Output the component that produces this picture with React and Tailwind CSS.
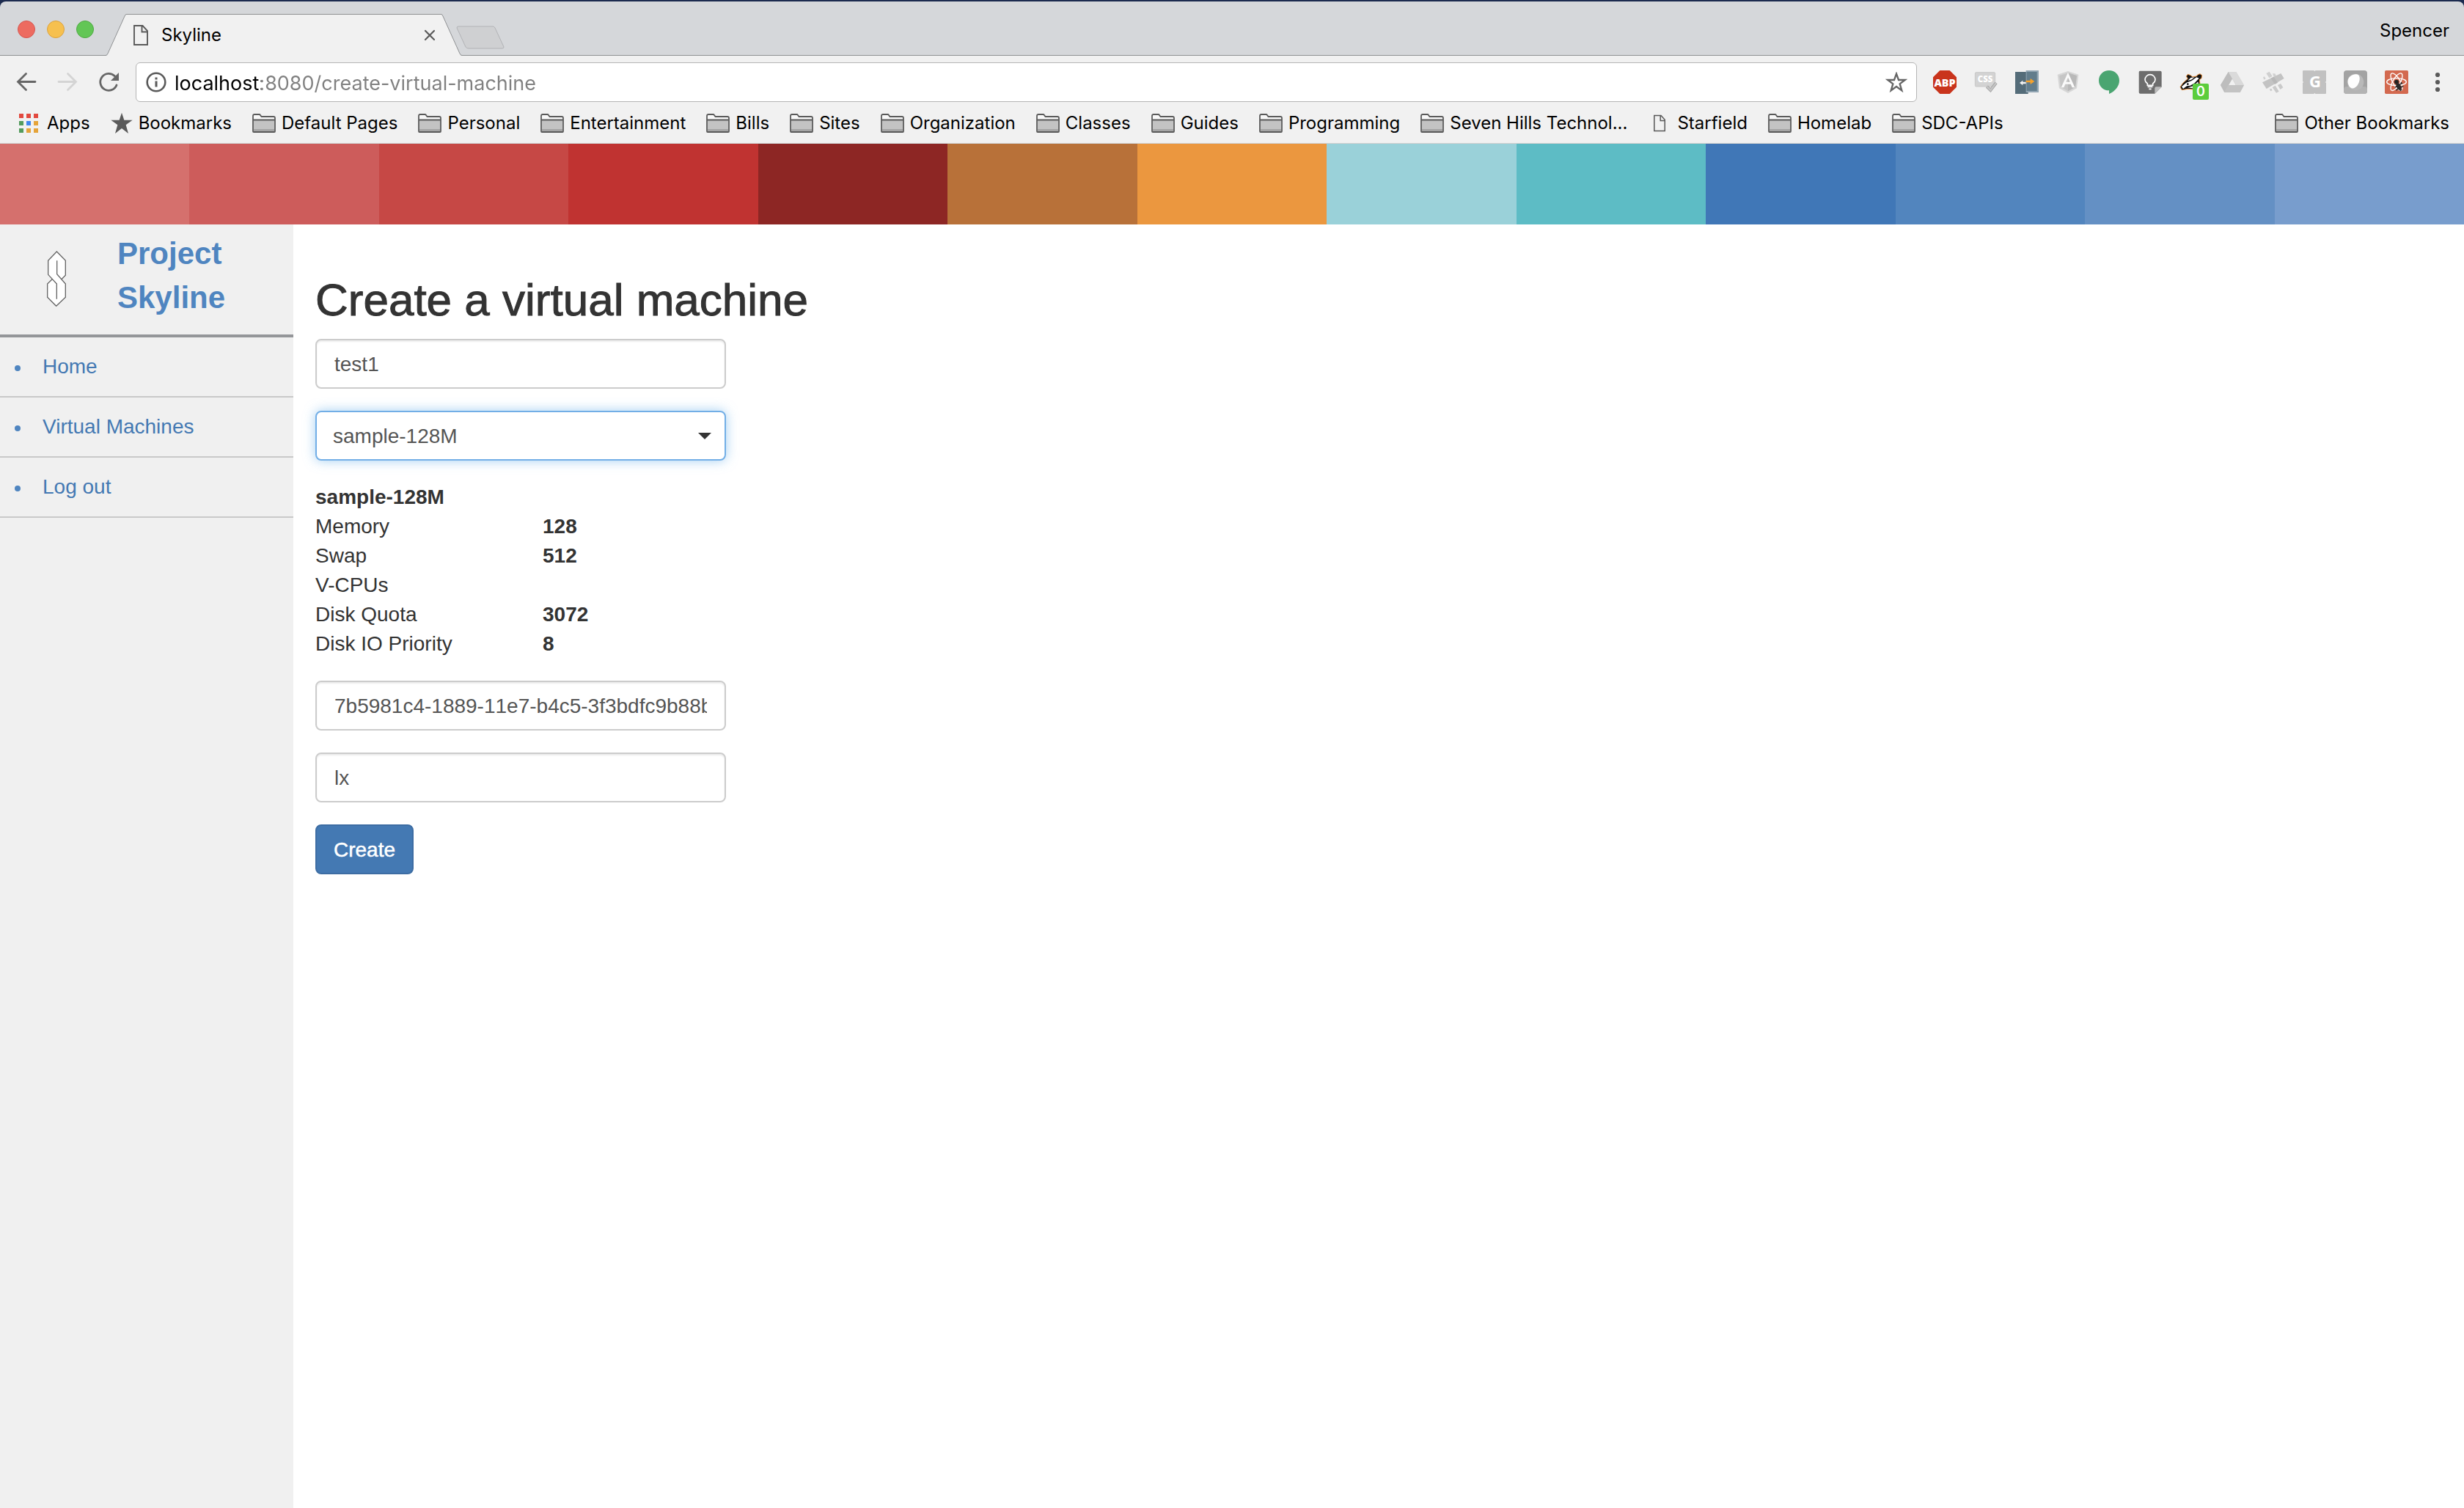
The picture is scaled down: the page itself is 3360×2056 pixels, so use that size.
import React from "react";

const BAND_COLORS = [
  "bg-[#d5706d]",
  "bg-[#cd5c5b]",
  "bg-[#c64845]",
  "bg-[#c03331]",
  "bg-[#8d2624]",
  "bg-[#b87139]",
  "bg-[#eb973f]",
  "bg-[#9ad1d9]",
  "bg-[#5dbcc5]",
  "bg-[#4077b7]",
  "bg-[#5285be]",
  "bg-[#6490c4]",
  "bg-[#789dcd]",
];

function AppsIcon() {
  const colors = ["#e2493f", "#e2493f", "#e2493f", "#539b5d", "#3f87f0", "#e5a43a", "#539b5d", "#e5a43a", "#e5a43a"];
  return (
    <svg className="h-[26px] w-[26px]" viewBox="0 0 26 26" aria-hidden="true">
      {colors.map((c, i) => (
        <rect key={i} x={(i % 3) * 10} y={Math.floor(i / 3) * 10} width="6" height="6" fill={c} />
      ))}
    </svg>
  );
}

function StarIcon() {
  return (
    <svg className="h-[30px] w-[30px]" viewBox="0 0 90 90" aria-hidden="true">
      <path d="M45 2 55 32H89L62 52 72 87 45 66 18 87 28 52 1 32H35Z" fill="#5a5a5a" />
    </svg>
  );
}

function FolderIcon() {
  return (
    <svg className="h-[26px] w-[32px]" viewBox="0 0 32 26" aria-hidden="true">
      <path d="M1 24V3q0-2 2-2h6.500q1 0 1.500 1l1.500 2H31v20q0 1-1 1H2q-1 0-1-1z" fill="#f8f8f8" />
      <rect x="2" y="9" width="28" height="15" fill="#c3c3c3" />
      <rect x="2" y="21" width="28" height="3" fill="#a5a5a5" />
      <path d="M1 24V3q0-2 2-2h6.500q1 0 1.500 1l1.500 2H29q2 0 2 2v18q0 1-1 1H2q-1 0-1-1zM1 8.500H31" fill="none" stroke="#5a5a5a" strokeWidth="1.800" />
    </svg>
  );
}

function PageIcon({ className }) {
  return (
    <svg className={className} viewBox="0 0 20 28" aria-hidden="true">
      <path d="M1 1h11.500L19 8v19H1zM11.500 1v8.500H19" fill="none" stroke="#5a5a5a" strokeWidth="1.900" />
    </svg>
  );
}

const BOOKMARKS = [
  ["Apps", "apps"],
  ["Bookmarks", "star"],
  ["Default Pages", "folder"],
  ["Personal", "folder"],
  ["Entertainment", "folder"],
  ["Bills", "folder"],
  ["Sites", "folder"],
  ["Organization", "folder"],
  ["Classes", "folder"],
  ["Guides", "folder"],
  ["Programming", "folder"],
  ["Seven Hills Technol...", "folder"],
  ["Starfield", "page"],
  ["Homelab", "folder"],
  ["SDC-APIs", "folder"],
];

function Bookmark({ label, icon }) {
  return (
    <a href="#" className="flex shrink-0 items-center gap-2 whitespace-nowrap">
      {icon === "apps" && <span className="mr-1"><AppsIcon /></span>}
      {icon === "star" && <StarIcon />}
      {icon === "folder" && <FolderIcon />}
      {icon === "page" && (
        <span className="flex w-8 justify-center">
          <PageIcon className="h-6 w-4" />
        </span>
      )}
      {label}
    </a>
  );
}

const EXTENSIONS = [
  {
    name: "Adblock Plus",
    art: (
      <>
        <path d="M28 0H68L96 28V68L68 96H28L0 68V28Z" fill="#c9341c" />
        <text x="48" y="65" textAnchor="middle" fontSize="43" fontWeight="800" fill="#fff" fontFamily="'Open Sans', sans-serif">ABP</text>
      </>
    ),
  },
  {
    name: "CSS checker",
    art: (
      <>
        <rect x="4" y="8" width="82" height="58" rx="4" fill="#d3d3d3" stroke="#bcbcbc" strokeWidth="2" />
        <text x="45" y="49" textAnchor="middle" fontSize="34" fontWeight="800" fill="#fff" fontFamily="'Open Sans', sans-serif">CSS</text>
        <path d="M52 66l15 15 23-30" fill="none" stroke="#9a9a9a" strokeWidth="12" />
        <path d="M52 66l15 15 23-30" fill="none" stroke="#c4c4c4" strokeWidth="8" />
      </>
    ),
  },
  {
    name: "Tab mover",
    art: (
      <>
        <path d="M0 6H48V88H53V96H0Z" fill="#546c79" />
        <rect x="44" y="0" width="52" height="90" fill="#92a6b3" />
        <rect x="47" y="6" width="42" height="78" fill="#627d8c" />
        <path d="M18 51 31 41v6h13v8H31v6z" fill="#f4f4f4" />
        <path d="M44 41h18V33L79 45 62 57V49H44z" fill="#f5a22c" />
      </>
    ),
  },
  {
    name: "Angular inspector",
    art: (
      <>
        <path d="M48 3 91 17 84 73 48 93 12 73 5 17Z" fill="#d6d6d6" />
        <path d="M48 10 84 22 78 68 48 85 18 68 12 22Z" fill="#c6c6c6" />
        <path d="M48 10 84 22 78 68 48 85Z" fill="#b9b9b9" />
        <path d="M48 8 20 70H31L37 56H59L65 70H76ZM48 29 56 47H40Z" fill="#fafafa" fillRule="evenodd" />
      </>
    ),
  },
  {
    name: "Hangouts",
    art: <path d="M48 0C24 0 6 18 6 41c0 24 18 41 42 41V96C74 85 90 63 90 41 90 18 72 0 48 0Z" fill="#4aa571" />,
  },
  {
    name: "Keep",
    art: (
      <>
        <path d="M6 2H89Q95 2 95 8V67L67 95H8Q2 95 2 89V8Q2 2 6 2Z" fill="#6d6d6d" />
        <path d="M67 95V73Q67 67 73 67H95Z" fill="#bcbcbc" />
        <path d="M37 61V54C31 49 27 44 27 38A21 21 0 0 1 69 38C69 44 65 49 59 54V61ZM38 67H58M43 76H53" fill="none" stroke="#fff" strokeWidth="5" />
      </>
    ),
  },
  {
    name: "Privacy Badger",
    badge: "0",
    art: (
      <>
        <path d="M3 68 14 52 34 34 28 24 34 16 46 20 52 26 70 24 74 18 84 14 92 20 90 32 82 38 84 56 64 78 34 76 10 80Z" fill="#111" stroke="#ee9440" strokeWidth="3" strokeLinejoin="round" />
        <path d="M9 66 28 50 50 42 70 28 80 32 62 52 44 62 30 64 15 75Z" fill="#fff" />
        <path d="M34 42 46 30 62 28 48 38Z" fill="#fff" />
        <path d="M34 70 56 64 76 46 78 56 62 74Z" fill="#f2f2f2" />
        <circle cx="34" cy="56" r="4" fill="#111" />
      </>
    ),
  },
  {
    name: "Drive",
    art: (
      <>
        <path d="M32 6H64L96 60 80 90H16L0 60Z" fill="#cfcfcf" />
        <path d="M32 6 48 34 16 90 0 60Z" fill="#bdbdbd" />
        <path d="M32 6H64L96 60H64Z" fill="#dadada" />
        <path d="M32 60H96L80 90H16Z" fill="#c3c3c3" />
        <path d="M48 35 62 60H34Z" fill="#f1f1f1" />
      </>
    ),
  },
  {
    name: "Cross stitch",
    art: (
      <>
        <path d="M19 12 32 5 44 24 31 31ZM45 13 55 13 60 23 50 26ZM6 28 12 25 17 34 10 38Z" fill="#d0d0d0" />
        <path d="M44 69 56 62 71 86 60 92ZM66 60 78 54 88 70 76 78ZM33 76 40 74 44 82 36 85Z" fill="#cacaca" />
        <path d="M3 49 79 12 92 33 20 75Z" fill="#c3c3c3" />
        <path d="M38 32 50 26 66 50 54 57Z" fill="#b8b8b8" />
      </>
    ),
  },
  {
    name: "Grammar",
    art: (
      <>
        <rect width="96" height="96" rx="3" fill="#c1c1c1" />
        <path d="M46 0h6l-3 4zM46 96h6l-3-4zM0 45v6l4-3zM96 45v6l-4-3z" fill="#f1f1f1" />
        <text x="51" y="70" textAnchor="middle" fontSize="66" fontWeight="700" fill="#fff" fontFamily="'Open Sans', sans-serif">G</text>
      </>
    ),
  },
  {
    name: "Opal",
    art: (
      <>
        <rect width="96" height="96" rx="12" fill="#a3a3a3" />
        <rect y="66" width="96" height="30" rx="12" fill="#b3b3b3" />
        <circle cx="48" cy="48" r="34" fill="#b9b9b9" />
        <path d="M20 60C8 30 34 14 54 16 70 18 68 48 54 64 42 78 26 76 20 60Z" fill="#fff" />
      </>
    ),
  },
  {
    name: "React developer tools",
    art: (
      <>
        <rect width="96" height="96" rx="5" fill="#d3694f" />
        <g fill="none" stroke="#fff" strokeWidth="4">
          <ellipse cx="48" cy="47" rx="40" ry="15" />
          <ellipse cx="48" cy="47" rx="40" ry="15" transform="rotate(60 48 47)" />
          <ellipse cx="48" cy="47" rx="40" ry="15" transform="rotate(120 48 47)" />
        </g>
        <circle cx="48" cy="47" r="9" fill="#222" />
        <ellipse cx="57" cy="66" rx="9" ry="16" transform="rotate(-28 57 66)" fill="#2b2b2b" />
        <path d="M42 70 52 62 72 52M46 82 56 74 76 64M62 84 70 78M68 48 66 56" fill="none" stroke="#2b2b2b" strokeWidth="4" />
      </>
    ),
  },
];

function Extension({ name, art, badge }) {
  return (
    <button type="button" aria-label={name} className="relative h-8 w-8">
      <svg className="h-8 w-8" viewBox="0 0 96 96" aria-hidden="true">
        {art}
      </svg>
      {badge && (
        <span className="absolute top-[18px] left-[18px] flex h-[22px] w-[22px] items-center justify-center rounded-xs bg-[#5bcd3c] text-lg leading-none font-semibold text-white">
          {badge}
        </span>
      )}
    </button>
  );
}

function TitleBar() {
  return (
    <div className="bg-[#1c2b4f] pt-0.5">
      <div className="flex h-[74px] items-end rounded-t-lg border-b border-[#8f9193] bg-[#d5d7da]">
        <div className="flex gap-4 self-start pt-[26px] pl-6">
          <button type="button" aria-label="Close window" className="h-6 w-6 rounded-full border border-[#d55650] bg-[#ed6b60]" />
          <button type="button" aria-label="Minimize window" className="h-6 w-6 rounded-full border border-[#dba23f] bg-[#f6c04f]" />
          <button type="button" aria-label="Zoom window" className="h-6 w-6 rounded-full border border-[#4fa943] bg-[#62c655]" />
        </div>
        <div className="-mb-px ml-4 flex h-[57px]">
          <svg className="h-[57px] w-7" viewBox="0 0 28 57" aria-hidden="true">
            <path d="M0 57Q2 57 3 54L26 3Q27 .5 28 .5V57Z" fill="#f1f1f1" />
            <path d="M0 56.500Q2 56.500 3 54L26 3Q27 .5 28 .5" fill="none" stroke="#8f9193" />
          </svg>
          <div className="flex w-[430px] items-center border-t border-[#8f9193] bg-[#f1f1f1] pr-2 pl-[10px]">
            <PageIcon className="h-7 w-5" />
            <span className="flex-1 pl-[18px]">Skyline</span>
            <button type="button" aria-label="Close tab">
              <svg className="h-4 w-4" viewBox="0 0 16 16" aria-hidden="true">
                <path d="M2 2 14 14M14 2 2 14" stroke="#5a5a5a" strokeWidth="2.200" strokeLinecap="round" />
              </svg>
            </button>
          </div>
          <svg className="h-[57px] w-7" viewBox="0 0 28 57" aria-hidden="true">
            <path d="M28 57Q26 57 25 54L2 3Q1 .5 0 .5V57Z" fill="#f1f1f1" />
            <path d="M28 56.500Q26 56.500 25 54L2 3Q1 .5 0 .5" fill="none" stroke="#8f9193" />
          </svg>
        </div>
        <button type="button" aria-label="New tab" className="mb-2 -ml-2">
          <svg className="h-8 w-[66px]" viewBox="0 0 66 32" aria-hidden="true">
            <path d="M3 1H50Q52 1 53 3L65 29Q65 31 63 31H17Q14 31 13 29L1 3Q1 1 3 1Z" fill="#cfd0d2" stroke="#b2b3b6" />
          </svg>
        </button>
        <button type="button" className="mt-[26px] mr-5 ml-auto self-start leading-7">Spencer</button>
      </div>
    </div>
  );
}

function Toolbar() {
  return (
    <div className="flex h-16 items-center bg-[#f1f1f1] pt-2 pr-5 pl-5">
      <div className="flex gap-6">
        <button type="button" aria-label="Back">
          <svg className="h-8 w-8" viewBox="0 0 32 32" aria-hidden="true">
            <path d="M28 15.500H5M15.500 4.500 4.500 15.500 15.500 26.500" fill="none" stroke="#666" strokeWidth="2.800" strokeLinecap="round" />
          </svg>
        </button>
        <button type="button" aria-label="Forward">
          <svg className="h-8 w-8" viewBox="0 0 32 32" aria-hidden="true">
            <path d="M4 15.500H27M16.500 4.500 27.500 15.500 16.500 26.500" fill="none" stroke="#d4d4d4" strokeWidth="2.800" strokeLinecap="round" />
          </svg>
        </button>
        <button type="button" aria-label="Reload">
          <svg className="h-8 w-8" viewBox="0 0 32 32" aria-hidden="true">
            <path d="M24.500 7.800A11.500 11.500 0 1 0 27 20" fill="none" stroke="#666" strokeWidth="2.800" strokeLinecap="round" />
            <path d="M30 3V14H19Z" fill="#666" />
          </svg>
        </button>
      </div>
      <div className="ml-[21px] flex h-[54px] flex-1 items-center rounded-md border border-[#b5b5b5] bg-white pr-3 pl-[13px]">
        <svg className="h-7 w-7" viewBox="0 0 28 28" aria-hidden="true">
          <circle cx="14" cy="14" r="12.300" fill="none" stroke="#5a5a5a" strokeWidth="2.600" />
          <path d="M12.500 12.500h3v8h-3zM12.500 7.500h3v3h-3z" fill="#5a5a5a" />
        </svg>
        <input
          type="text"
          aria-label="Address"
          defaultValue="localhost:8080/create-virtual-machine"
          className="ml-[11px] h-10 flex-1 bg-[linear-gradient(to_right,#000_118px,#808080_118px)] bg-clip-text pt-0.5 text-[27px] text-transparent outline-none"
        />
        <button type="button" aria-label="Bookmark this page">
          <svg className="h-7 w-[30px]" viewBox="0 0 90 84" aria-hidden="true">
            <path d="M45 8 54 33H80L59 49 67 76 45 60 23 76 31 49 10 33H36Z" fill="none" stroke="#666" strokeWidth="7" />
          </svg>
        </button>
      </div>
      <div className="ml-[22px] flex gap-6">
        {EXTENSIONS.map((e) => (
          <Extension key={e.name} {...e} />
        ))}
        <button type="button" aria-label="Menu">
          <svg className="h-8 w-8" viewBox="0 0 32 32" aria-hidden="true">
            <g fill="#5a5a5a">
              <circle cx="16" cy="6" r="3.100" />
              <circle cx="16" cy="16" r="3.100" />
              <circle cx="16" cy="26" r="3.100" />
            </g>
          </svg>
        </button>
      </div>
    </div>
  );
}

function BookmarksBar() {
  return (
    <nav aria-label="Bookmarks" className="flex h-14 items-center gap-7 border-b border-[#cfcfcf] bg-[#f1f1f1] pr-5 pl-[26px]">
      {BOOKMARKS.map(([label, icon]) => (
        <Bookmark key={label} label={label} icon={icon} />
      ))}
      <div className="ml-auto">
        <Bookmark label="Other Bookmarks" icon="folder" />
      </div>
    </nav>
  );
}

function Logo() {
  return (
    <svg className="h-[76px] w-7" viewBox="0 0 84 228" aria-hidden="true">
      <path d="M43 3 79 40V100L62 117 79 135V190L41 227 5 190V135L26 115 8 97V40Z" fill="#fff" />
      <path
        d="M62 117 79 100V40L43 3 8 40V97L43 135V197M44 40V95L79 135V190L41 226 5 190V135L26 115"
        fill="none"
        stroke="#666"
        strokeWidth="4"
      />
    </svg>
  );
}

function Sidebar() {
  return (
    <aside className="w-[400px] shrink-0 bg-[#f0f0f0]">
      <div className="flex h-[154px] items-start border-b-4 border-[#949699] pl-[63px]">
        <div className="pt-9">
          <Logo />
        </div>
        <h1 className="ml-[69px] w-[200px] pt-[10px] text-[42px] leading-[60px] font-bold text-[#4f85c0]">Project Skyline</h1>
      </div>
      <ul>
        {["Home", "Virtual Machines", "Log out"].map((label) => (
          <li key={label} className="flex h-[82px] items-center border-b-2 border-[#c9c9c9] pl-5">
            <span className="mt-1 h-2 w-2 rounded-full bg-[#4f85c0]" />
            <a href="#" className="ml-[30px] leading-10 text-[#4479b3]">{label}</a>
          </li>
        ))}
      </ul>
    </aside>
  );
}

const SPECS = [
  ["Memory", "128"],
  ["Swap", "512"],
  ["V-CPUs", ""],
  ["Disk Quota", "3072"],
  ["Disk IO Priority", "8"],
];

function Field({ label, value }) {
  return (
    <input
      type="text"
      aria-label={label}
      defaultValue={value}
      className="h-[68px] w-full rounded-lg border-2 border-[#ccc] bg-white px-6 pt-0.5 text-[#555] shadow-[inset_0_2px_2px_rgba(0,0,0,0.075)] outline-none [font-kerning:none]"
    />
  );
}

function CreateForm() {
  return (
    <form className="flex w-[560px] flex-col items-start gap-[30px]" onSubmit={(e) => e.preventDefault()}>
      <Field label="Name" value="test1" />
      <div className="relative w-full">
        <select
          aria-label="Package"
          className="block h-[68px] w-full appearance-none rounded-lg border-2 border-[#72aee6] bg-white px-[22px] pt-0.5 text-[#555] shadow-[0_0_16px_rgba(102,175,233,0.6)] outline-none"
        >
          <option>sample-128M</option>
        </select>
        <svg className="pointer-events-none absolute top-[30px] right-5 h-[9px] w-[18px]" viewBox="0 0 18 9" aria-hidden="true">
          <path d="M0 0H18L9 9Z" fill="#333" />
        </svg>
      </div>
      <table className="w-full text-left leading-10 text-[#333]">
        <thead>
          <tr>
            <th colSpan={2} className="p-0 font-bold">sample-128M</th>
          </tr>
        </thead>
        <tbody>
          {SPECS.map(([label, value]) => (
            <tr key={label}>
              <td className="w-[310px] p-0">{label}</td>
              <td className="p-0 font-bold">{value}</td>
            </tr>
          ))}
        </tbody>
      </table>
      <Field label="Image" value="7b5981c4-1889-11e7-b4c5-3f3bdfc9b88b" />
      <Field label="Brand" value="lx" />
      <button type="submit" className="h-[68px] rounded-lg border-2 border-[#3d6da3] bg-[#4479b3] px-[23px] pt-0.5 text-white [-webkit-text-stroke:0.5px_white]">
        Create
      </button>
    </form>
  );
}

export default function App() {
  return (
    <div className="flex min-h-screen flex-col bg-white">
      <header className="font-['Inter',sans-serif] text-2xl text-black">
        <TitleBar />
        <Toolbar />
        <BookmarksBar />
      </header>
      <div className="flex flex-1 flex-col font-['Liberation_Sans',Arial,sans-serif] text-[28px]">
        <div className="flex h-[110px]">
          {BAND_COLORS.map((c) => (
            <div key={c} className={"flex-1 " + c} />
          ))}
        </div>
        <div className="flex flex-1">
          <Sidebar />
          <main className="flex-1 px-[30px] pt-[70px]">
            <h2 className="mb-5 text-[62px] leading-[66px] text-[#333] [-webkit-text-stroke:1px_#333]">Create a virtual machine</h2>
            <CreateForm />
          </main>
        </div>
      </div>
    </div>
  );
}
